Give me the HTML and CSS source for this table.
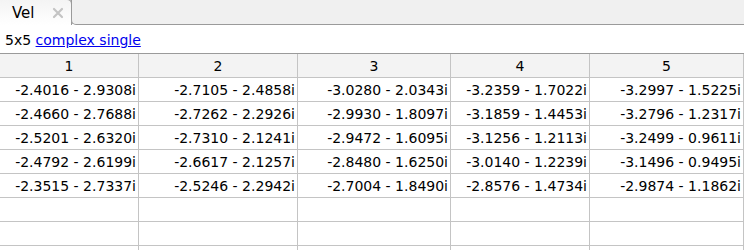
FILE: index.html
```html
<!DOCTYPE html>
<html>
<head>
<meta charset="utf-8">
<link rel="stylesheet" href="styles.css">
</head>
<body>
<div class="tabbar">
  <div class="tab">
    <span class="tab-label">Vel</span>
    <svg class="tab-close" width="12" height="12" viewBox="0 0 12 12"><path d="M2 2 L10 10 M10 2 L2 10" stroke="#c4c4c4" stroke-width="2.2" stroke-linecap="round"/></svg>
  </div>
  <div class="tab-rest"></div>
</div>
<div class="info">5x5 <a href="#">complex single</a></div>
<div class="grid">
  <div class="hd">1</div><div class="hd">2</div><div class="hd">3</div><div class="hd">4</div><div class="hd">5</div>
  <div class="c">-2.4016 - 2.9308i</div><div class="c">-2.7105 - 2.4858i</div><div class="c">-3.0280 - 2.0343i</div><div class="c">-3.2359 - 1.7022i</div><div class="c">-3.2997 - 1.5225i</div>
  <div class="c">-2.4660 - 2.7688i</div><div class="c">-2.7262 - 2.2926i</div><div class="c">-2.9930 - 1.8097i</div><div class="c">-3.1859 - 1.4453i</div><div class="c">-3.2796 - 1.2317i</div>
  <div class="c">-2.5201 - 2.6320i</div><div class="c">-2.7310 - 2.1241i</div><div class="c">-2.9472 - 1.6095i</div><div class="c">-3.1256 - 1.2113i</div><div class="c">-3.2499 - 0.9611i</div>
  <div class="c">-2.4792 - 2.6199i</div><div class="c">-2.6617 - 2.1257i</div><div class="c">-2.8480 - 1.6250i</div><div class="c">-3.0140 - 1.2239i</div><div class="c">-3.1496 - 0.9495i</div>
  <div class="c">-2.3515 - 2.7337i</div><div class="c">-2.5246 - 2.2942i</div><div class="c">-2.7004 - 1.8490i</div><div class="c">-2.8576 - 1.4734i</div><div class="c">-2.9874 - 1.1862i</div>
  <div class="c"></div><div class="c"></div><div class="c"></div><div class="c"></div><div class="c"></div>
  <div class="c"></div><div class="c"></div><div class="c"></div><div class="c"></div><div class="c"></div>
  <div class="c"></div><div class="c"></div><div class="c"></div><div class="c"></div><div class="c"></div>
</div>
</body>
</html>
```
FILE: styles.css
```css
html, body {
  margin: 0;
  padding: 0;
  background: #ffffff;
  font-family: "DejaVu Sans", "Noto Sans", sans-serif;
  font-size: 14px;
  color: #000000;
  overflow: hidden;
}

.tabbar {
  display: flex;
  height: 25px;
}

.tab {
  box-sizing: border-box;
  width: 72px;
  margin-top: -1px;
  height: 26px;
  border-top: 1px solid #9a9a9a;
  border-right: 1px solid #9a9a9a;
  border-top-right-radius: 5px;
  background: linear-gradient(#f4f4f4, #ffffff);
  display: flex;
  align-items: center;
  padding-left: 12px;
}

.tab-label {
  font-size: 15px;
  line-height: 1;
  margin-top: 1px;
}

.tab-close {
  margin-left: 17px;
  margin-top: 1px;
}

.tab-rest {
  flex: 1;
  box-sizing: border-box;
  height: 25px;
  margin-left: -1px;
  background: #f0f0f0;
  border-left: 1px solid #9a9a9a;
  border-bottom: 1px solid #9a9a9a;
  border-bottom-left-radius: 5px;
}

.info {
  height: 28px;
  box-sizing: border-box;
  padding-left: 5px;
  padding-top: 7px;
  line-height: 17px;
}

.info a {
  color: #0000ee;
  text-decoration: underline;
}

.grid {
  display: grid;
  grid-template-columns: 139px 159px 153px 139px 154px;
  border-top: 1px solid #9a9a9a;
}

.hd, .c {
  box-sizing: border-box;
  height: 24px;
  padding-top: 2px;
  border-right: 1px solid #c4c4c4;
  border-bottom: 1px solid #c4c4c4;
  line-height: 21px;
  white-space: nowrap;
  overflow: hidden;
}

.hd {
  background: #f3f3f3;
  text-align: center;
}

.c {
  text-align: right;
  padding-right: 2px;
}
```
